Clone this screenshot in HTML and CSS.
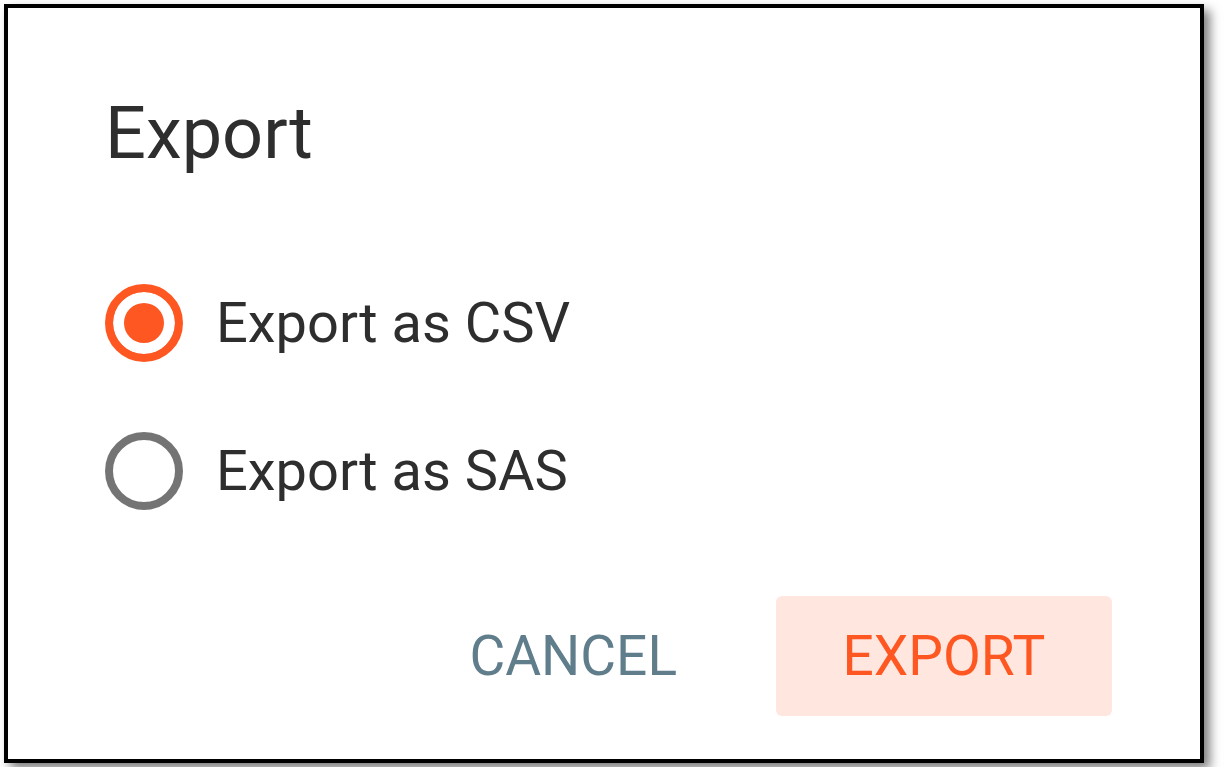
FILE: index.html
```html
<!DOCTYPE html>
<html lang="en">
<head>
    <meta charset="UTF-8">
    <meta name="viewport" content="width=device-width, initial-scale=1.0">
    <title>Export</title>
    <link rel="stylesheet" href="styles.css">
</head>
<body>
    <div class="dialog">
        <h1>Export</h1>

        <div class="options">
            <label class="option">
                <input type="radio" name="format" value="csv" checked>
                <span>Export as CSV</span>
            </label>
            <label class="option">
                <input type="radio" name="format" value="sas">
                <span>Export as SAS</span>
            </label>
        </div>

        <div class="actions">
            <button class="btn btn-cancel">CANCEL</button>
            <button class="btn btn-export">EXPORT</button>
        </div>
    </div>
</body>
</html>
```

FILE: styles.css
```css
body {
    font-family: Roboto, 'Liberation Sans', sans-serif;
    margin: 0;
    padding: 4px;
    background: #fff;
    color: #2e2e2e;
}
.dialog {
    box-sizing: border-box;
    width: 1200px;
    height: 759px;
    border: 4px solid #000;
    background: #fff;
    box-shadow: 6px 6px 10px rgba(0, 0, 0, 0.5);
    padding: 85px 88px 0 93px;
    display: flex;
    flex-direction: column;
}
h1 {
    margin: 0 0 0 4px;
    font-size: 72px;
    font-weight: 400;
    line-height: 82px;
    color: #2e2e2e;
}
.options {
    margin-top: 74px;
}
.option {
    display: flex;
    align-items: center;
    gap: 33px;
    height: 148px;
    font-size: 56px;
    color: #2e2e2e;
    cursor: pointer;
}
.option input {
    appearance: none;
    -webkit-appearance: none;
    margin: 0 0 0 4px;
    width: 78px;
    height: 78px;
    border: 8px solid #747474;
    border-radius: 50%;
    background: #fff;
    box-sizing: border-box;
}
.option input:checked {
    border-color: #ff5722;
    background: #ff5722;
    box-shadow: inset 0 0 0 11px #fff;
}
.actions {
    margin-top: 51px;
    display: flex;
    justify-content: flex-end;
    gap: 37px;
}
.btn {
    height: 120px;
    padding: 0 62px;
    border: none;
    border-radius: 6px;
    background: transparent;
    font-family: Roboto, 'Liberation Sans', sans-serif;
    font-size: 55px;
    font-weight: 400;
    cursor: pointer;
}
.btn-cancel {
    color: #607d8b;
}
.btn-export {
    width: 336px;
    color: #ff5722;
    background: #ffe6de;
}
```
